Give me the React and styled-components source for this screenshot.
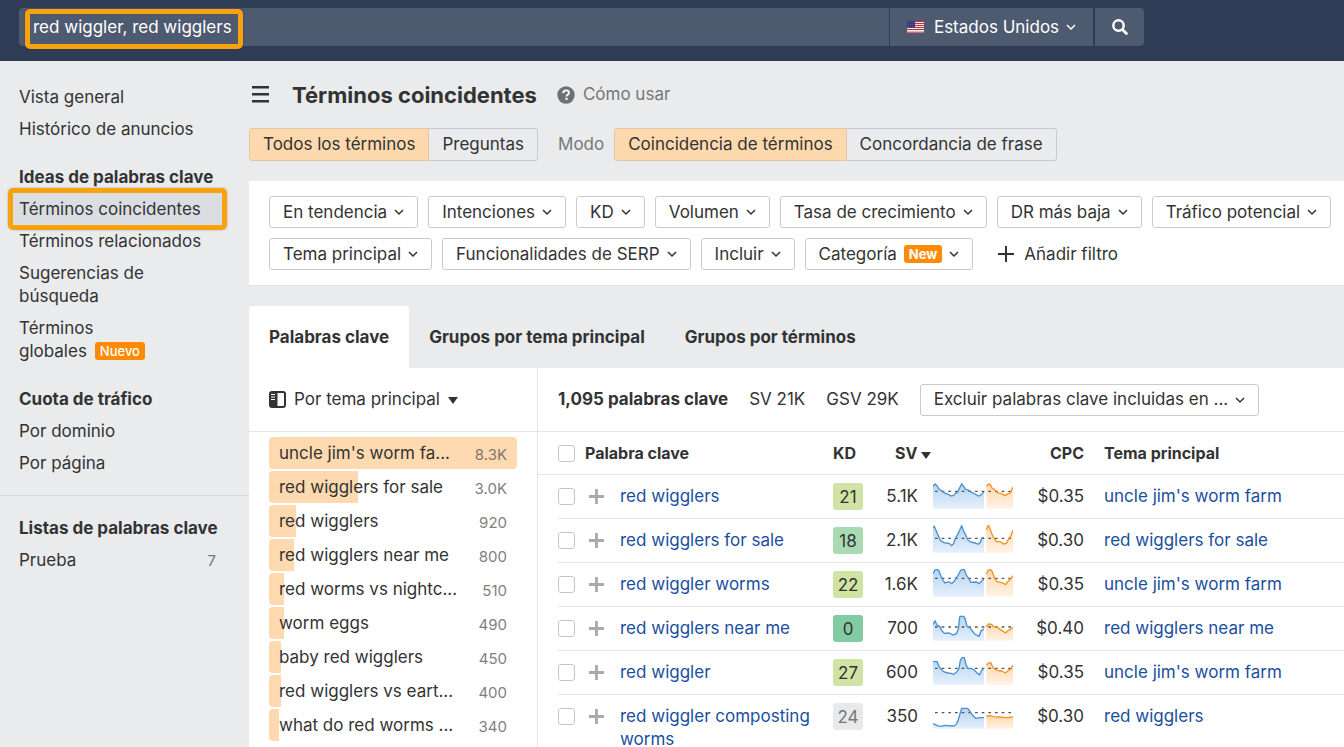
import React, { useState } from 'react';
import styled, { createGlobalStyle } from 'styled-components';

const GlobalStyle = createGlobalStyle`
  * {
    box-sizing: border-box;
  }
  body {
    margin: 0;
    background: #e9ebed;
    color: #333;
    font-family: Inter, 'Liberation Sans', sans-serif;
    font-size: 17px;
    line-height: 23px;
    overflow-x: hidden;
  }
  button, input {
    font: inherit;
    color: inherit;
  }
  button {
    cursor: pointer;
  }
  a {
    color: inherit;
    text-decoration: none;
  }
`;

const TopBar = styled.header`
  padding: 8px 200px 15px 19px;
  background: #2f3c56;
  color: #fff;
`;

const SearchForm = styled.form`
  display: flex;
  height: 38px;
  border-radius: 4px;
  overflow: hidden;
`;

const SearchInput = styled.input`
  display: block;
  flex: 1;
  min-width: 0;
  height: 38px;
  padding: 0 14px;
  border: none;
  outline: none;
  background: #4e5a70;
`;

const BarButton = styled.button`
  display: flex;
  align-items: center;
  justify-content: center;
  gap: ${(props) => props.$gap || 0}px;
  width: ${(props) => props.$width}px;
  margin-left: ${(props) => props.$space}px;
  padding: 0;
  border: none;
  background: #4e5a70;
`;

const CountryName = styled.span`
  margin-left: 3px;
`;

// orange frame laid over the control it points at
const Marker = styled.span`
  position: absolute;
  inset: -5px -1px;
  border: 5px solid #f9a20f;
  border-radius: 5px;
  box-shadow: 0 0 2px rgba(0, 0, 0, 0.3);
  pointer-events: none;
`;

const SearchMarker = styled(Marker)`
  inset: 9px auto auto 25px;
  width: 218px;
  height: 40px;
`;

const Page = styled.div`
  display: flex;
  align-items: stretch;
`;

const Sidebar = styled.nav`
  flex: 0 0 249px;
  padding-top: 20px;
`;

const SideSection = styled.section`
  padding-bottom: 16px;
  border-bottom: ${(props) => (props.$divider ? '1px solid #d6d9dc' : 'none')};
  margin-bottom: ${(props) => (props.$divider ? 16 : 0)}px;
`;

const SideHeading = styled.h2`
  margin: 0;
  padding: 5px 19px 4px;
  font-size: 17px;
  font-weight: 700;
`;

const SideLink = styled.a`
  position: relative;
  display: flex;
  justify-content: space-between;
  margin: 0 23px 0 9px;
  padding: 5px ${(props) => (props.$narrow ? 50 : 10)}px 4px 10px;
  background: ${(props) => (props.$active ? '#dadde2' : 'transparent')};
`;

const Count = styled.span`
  font-size: 15px;
  color: #777;
`;

const Badge = styled.span`
  display: inline-block;
  margin-left: ${(props) => props.$space}px;
  padding: 0 5px;
  border-radius: 3px;
  background: #ff8a05;
  color: #fff;
  font-size: 13px;
  line-height: 18px;
  font-weight: ${(props) => (props.$bold ? 700 : 500)};
  vertical-align: 1px;
`;

const Main = styled.main`
  flex: 1;
  min-width: 0;
`;

const TitleRow = styled.div`
  display: flex;
  align-items: center;
  height: 67px;
`;

const MenuButton = styled.button`
  display: flex;
  padding: 0;
  margin: 0 22px 0 3px;
  border: none;
  background: none;
`;

const Title = styled.h1`
  margin: 0 20px 0 0;
  font-size: 22px;
  line-height: 30px;
  font-weight: 700;
`;

const HelpLink = styled.a`
  display: flex;
  align-items: center;
  gap: 8px;
  color: #777;
`;

const ModeRow = styled.div`
  display: flex;
  align-items: center;
  margin-bottom: 20px;
`;

const ModeLabel = styled.span`
  margin: 0 10px 0 20px;
  color: #777;
`;

const Segment = styled.button`
  height: 33px;
  padding: 0 13px;
  border: 1px solid #c8cbce;
  border-left-width: ${(props) => (props.$first ? 1 : 0)}px;
  border-radius: ${(props) => (props.$first ? '3px 0 0 3px' : '0 3px 3px 0')};
  background: ${(props) => (props.$active ? '#ffd9ae' : 'transparent')};
  border-color: ${(props) => (props.$active ? '#dfc7a8' : '#c8cbce')};
`;

const FilterPanel = styled.section`
  display: flex;
  flex-direction: column;
  gap: 10px;
  padding: 15px 0 15px 20px;
  margin-bottom: 20px;
  background: #fff;
  border-bottom: 1px solid #dfe1e3;
  overflow: hidden;
`;

const FilterRow = styled.div`
  display: flex;
  gap: 10px;
`;

const DropButton = styled.button`
  display: flex;
  flex: none;
  align-items: center;
  gap: 7px;
  height: 32px;
  padding: 0 13px;
  border: 1px solid #c8cbce;
  border-radius: 3px;
  background: #fff;
  white-space: nowrap;
`;

const AddFilter = styled.button`
  display: flex;
  align-items: center;
  gap: 10px;
  margin-left: 15px;
  padding: 0;
  border: none;
  background: none;
`;

const Tabs = styled.div`
  display: flex;
`;

const Tab = styled.button`
  height: 62px;
  padding: 0 20px;
  border: none;
  border-radius: 3px 3px 0 0;
  background: ${(props) => (props.$active ? '#fff' : 'transparent')};
  font-weight: 700;
`;

const Content = styled.div`
  display: flex;
  background: #fff;
`;

const TopicColumn = styled.section`
  flex: 0 0 289px;
  border-right: 1px solid #e3e5e8;
`;

const Toolbar = styled.div`
  display: flex;
  align-items: center;
  gap: ${(props) => props.$gap}px;
  height: 64px;
  padding: 0 20px;
  border-bottom: 1px solid #e3e5e8;
`;

const TopicButton = styled.button`
  display: flex;
  align-items: center;
  gap: 8px;
  padding: 0;
  border: none;
  background: none;
`;

const TopicList = styled.ul`
  display: flex;
  flex-direction: column;
  gap: 2px;
  margin: 0;
  padding: 5px 20px 10px;
  list-style: none;
`;

const Topic = styled.li`
  position: relative;
  display: flex;
  align-items: center;
  justify-content: space-between;
  height: 32px;
  padding: 0 10px;
  border-radius: 4px;
  overflow: hidden;
`;

const TopicBar = styled.span`
  position: absolute;
  inset: 0 auto 0 0;
  background: #ffd9b0;
`;

const TopicName = styled.a`
  position: relative;
`;

const TopicVolume = styled.span`
  position: relative;
  padding-top: 2px;
  font-size: 15px;
  color: #555;
  opacity: 0.75;
`;

const KeywordColumn = styled.section`
  flex: 1;
  min-width: 0;
  overflow: hidden;
`;

const Total = styled.strong`
  font-weight: 700;
`;

const Table = styled.table`
  width: 100%;
  min-width: 780px;
  table-layout: fixed;
  border-spacing: 0;
`;

const HeadCell = styled.th`
  height: 43px;
  padding: 0 ${(props) => props.$right || 0}px 0 ${(props) => props.$left || 0}px;
  border-bottom: 1px solid #e3e5e8;
  font-size: 16px;
  font-weight: 700;
  text-align: ${(props) => props.$align || 'left'};
  white-space: nowrap;
`;

const Cell = styled.td`
  height: 44px;
  padding: ${(props) => props.$top || 10}px ${(props) => props.$right || 0}px 0 0;
  vertical-align: top;
  text-align: ${(props) => props.$align || 'left'};
  background: linear-gradient(#e3e5e8, #e3e5e8) ${(props) => props.$inset || 0}px 100% / 100% 1px no-repeat;
`;

const KeywordLink = styled.a`
  color: #1a4f9f;
  &:hover {
    text-decoration: underline;
  }
`;

const Check = styled.input.attrs({ type: 'checkbox' })`
  appearance: none;
  display: block;
  width: 17px;
  height: 17px;
  margin: ${(props) => props.$top || 0}px 0 0 20px;
  border: 1px solid #c3c7cb;
  border-radius: 3px;
  background: #fff;
  &:checked {
    background: #ff8a05;
  }
`;

const PlusButton = styled.button`
  display: flex;
  padding: 0;
  margin: 4px 0 0 4px;
  border: none;
  background: none;
`;

const Difficulty = styled.span`
  display: block;
  width: 30px;
  height: 27px;
  border-radius: 3px;
  line-height: 28px;
  text-align: center;
  background: ${(props) => props.$color};
  color: ${(props) => (props.$muted ? '#777' : '#333')};
`;

const Sparkline = styled.svg`
  display: block;
  width: 80px;
  height: 28px;
`;

const Chevron = () => (
  <svg width="10" height="10" viewBox="0 0 10 10" fill="none" stroke="currentColor" strokeWidth="1.5">
    <path d="M1 3l4 4 4-4" />
  </svg>
);

const Caret = () => (
  <svg width="10" height="8" viewBox="0 0 10 8" fill="currentColor">
    <path d="M0 1h10L5 8z" />
  </svg>
);

const Plus = ({ size, color, weight }) => (
  <svg width={size} height={size} viewBox="0 0 16 16" stroke={color} strokeWidth={weight}>
    <path d="M8 0v16M0 8h16" />
  </svg>
);

const Flag = () => (
  <svg width="17" height="12" viewBox="0 0 17 12">
    <path d="M0 0h17v12H0z" fill="#f3e9ec" />
    <path d="M0 .5h17M0 2.5h17M0 4.5h17M0 6.5h17M0 8.5h17M0 11.2h17" stroke="#b83240" />
    <path d="M0 0h8v6.5H0z" fill="#31407c" />
    <path d="M1 1.5h6M1 3.5h6M1 5.2h6" stroke="#6673a3" strokeWidth=".5" strokeDasharray="1 1" />
  </svg>
);

const MagnifierIcon = () => (
  <svg width="16" height="16" viewBox="0 0 16 16" fill="none" stroke="#fff">
    <circle cx="6.5" cy="6.5" r="5.2" strokeWidth="2.4" />
    <path d="M10.4 10.4l4 4" strokeWidth="2.8" strokeLinecap="round" />
  </svg>
);

const MenuIcon = () => (
  <svg width="18" height="18" viewBox="0 0 18 18" stroke="#333" strokeWidth="2.4">
    <path d="M0 1.3h17M0 8.3h17M0 15.3h17" />
  </svg>
);

const HelpIcon = () => (
  <svg width="18" height="18" viewBox="0 0 18 18">
    <circle cx="9" cy="9" r="8.7" fill="#6f7173" />
    <path
      d="M6.2 7.1C6.3 5.3 7.5 4.4 9.1 4.4c1.6 0 2.8.9 2.8 2.3 0 1-.5 1.6-1.3 2.1-.8.5-1.1.8-1.1 1.6"
      fill="none"
      stroke="#fff"
      strokeWidth="1.9"
    />
    <path d="M8.4 11.8h2.2v2.1H8.4z" fill="#fff" />
  </svg>
);

const PanelIcon = () => (
  <svg width="17" height="17" viewBox="0 0 17 17">
    <rect x="1" y="1" width="15" height="15" rx="2" fill="none" stroke="#333" strokeWidth="2" />
    <path d="M1 1h7.5v15H1z" fill="#333" />
    <path d="M2 3.5h4M2 6h4M2 8.5h4" stroke="#fff" />
  </svg>
);

const filtersTop = [
  'En tendencia',
  'Intenciones',
  'KD',
  'Volumen',
  'Tasa de crecimiento',
  'DR más baja',
  'Tráfico potencial',
];
const filtersBottom = ['Tema principal', 'Funcionalidades de SERP', 'Incluir'];

const tabs = ['Palabras clave', 'Grupos por tema principal', 'Grupos por términos'];

const topics = [
  { name: "uncle jim's worm fa...", volume: '8.3K', share: 100 },
  { name: 'red wigglers for sale', volume: '3.0K', share: 36 },
  { name: 'red wigglers', volume: '920', share: 11 },
  { name: 'red wigglers near me', volume: '800', share: 10 },
  { name: 'red worms vs nightc...', volume: '510', share: 6 },
  { name: 'worm eggs', volume: '490', share: 6 },
  { name: 'baby red wigglers', volume: '450', share: 5 },
  { name: 'red wigglers vs eart...', volume: '400', share: 5 },
  { name: 'what do red worms ...', volume: '340', share: 4 },
];

const green = '#d0e3a4';

// past / forecast are sparkline points on a 240x84 grid
const keywords = [
  {
    name: 'red wigglers', kd: 21, color: green, sv: '5.1K', cpc: '$0.35', topic: "uncle jim's worm farm", avg: 31,
    past: '0,16 6,9 12,14 18,24 26,29 34,36 44,39 54,45 62,43 68,36 74,34 80,20 86,9 92,16 98,25 106,27 116,34 126,39 136,45 144,42 150,35 153,33',
    forecast: '160,16 166,9 172,11 178,22 186,26 192,35 204,37 216,44 226,38 232,35 240,18',
  },
  {
    name: 'red wigglers for sale', kd: 18, color: '#a9dab3', sv: '2.1K', cpc: '$0.30', topic: 'red wigglers for sale', avg: 40,
    past: '0,8 4,4 10,18 16,32 22,46 32,53 40,54 48,55 56,62 62,55 66,42 72,32 78,20 86,2 92,18 98,30 104,44 112,51 126,54 136,58 142,52 146,40 153,37',
    forecast: '160,14 166,0 172,14 178,30 184,42 190,50 202,50 212,57 220,55 228,40 234,32 240,15',
  },
  {
    name: 'red wiggler worms', kd: 22, color: green, sv: '1.6K', cpc: '$0.35', topic: "uncle jim's worm farm", avg: 28,
    past: '0,14 6,3 12,1 18,6 24,22 30,34 36,42 48,38 56,44 64,36 70,26 76,18 82,6 88,1 94,2 100,18 108,30 114,40 130,39 138,44 144,38 153,29',
    forecast: '160,16 166,3 172,2 178,8 184,26 192,38 206,41 218,46 226,36 234,28 240,20',
  },
  {
    name: 'red wigglers near me', kd: 0, color: '#82cba3', sv: '700', cpc: '$0.40', topic: 'red wigglers near me', avg: 42,
    past: '0,34 6,24 12,36 20,40 26,52 34,61 48,60 60,66 70,62 76,48 80,12 82,10 92,10 96,16 102,40 110,44 118,54 126,64 138,70 144,54 153,48',
    forecast: '160,42 166,33 176,34 182,42 194,44 206,52 218,60 226,52 234,48 240,43',
  },
  {
    name: 'red wiggler', kd: 27, color: green, sv: '600', cpc: '$0.35', topic: "uncle jim's worm farm", avg: 34,
    past: '0,14 12,14 18,28 24,36 32,44 44,48 54,49 62,52 72,44 78,34 82,10 88,1 94,1 98,20 104,34 116,35 124,39 132,48 140,53 146,40 153,34',
    forecast: '160,24 168,18 174,18 180,32 192,40 206,42 218,48 226,40 234,36 240,24',
  },
  {
    name: 'red wiggler composting worms', kd: 24, color: '#e8e9eb', muted: true, sv: '350', cpc: '$0.30', topic: 'red wigglers', avg: 35,
    past: '0,69 6,70 12,74 24,76 36,73 60,75 68,72 74,62 80,42 86,22 104,22 110,30 118,42 128,52 140,50 153,50',
    forecast: '160,45 172,44 182,47 196,48 220,50 240,48',
  },
];

const Trend = ({ past, forecast, avg }) => (
  <Sparkline viewBox="0 0 240 84" aria-hidden="true">
    <defs>
      <linearGradient id="pastFill" x1="0" x2="0" y1="0" y2="1">
        <stop offset="0" stopColor="#b4d5f2" />
        <stop offset="1" stopColor="#e6f0fb" />
      </linearGradient>
      <linearGradient id="forecastFill" x1="0" x2="0" y1="0" y2="1">
        <stop offset="0" stopColor="#ffd9ae" />
        <stop offset="1" stopColor="#fff2e6" />
      </linearGradient>
    </defs>
    <polygon points={`0,83 ${past} 153,83`} fill="url(#pastFill)" />
    <polygon points={`160,83 ${forecast} 240,83`} fill="url(#forecastFill)" />
    <path d={`M6 ${avg}H240`} stroke="#555" strokeWidth="4" strokeDasharray="8 12" />
    <polyline points={past} fill="none" stroke="#4c8fd0" strokeWidth="4" />
    <polyline points={forecast} fill="none" stroke="#f59322" strokeWidth="4" />
  </Sparkline>
);

const App = () => {
  const [query, setQuery] = useState('red wiggler, red wigglers');
  const [activeTab, setActiveTab] = useState(0);

  return (
    <>
      <GlobalStyle />
      <TopBar>
        <SearchForm onSubmit={(e) => e.preventDefault()}>
          <SearchInput aria-label="Palabras clave" value={query} onChange={(e) => setQuery(e.target.value)} />
          <BarButton type="button" $width={203} $space={1} $gap={7}>
            <Flag />
            <CountryName>Estados Unidos</CountryName>
            <Chevron />
          </BarButton>
          <BarButton type="submit" aria-label="Buscar" $width={49} $space={2}>
            <MagnifierIcon />
          </BarButton>
        </SearchForm>
        <SearchMarker />
      </TopBar>
      <Page>
        <Sidebar>
          <SideSection>
            <SideLink href="#">Vista general</SideLink>
            <SideLink href="#">Histórico de anuncios</SideLink>
          </SideSection>
          <SideSection>
            <SideHeading>Ideas de palabras clave</SideHeading>
            <SideLink href="#" $active>
              Términos coincidentes
              <Marker />
            </SideLink>
            <SideLink href="#">Términos relacionados</SideLink>
            <SideLink href="#" $narrow>Sugerencias de búsqueda</SideLink>
            <SideLink href="#" $narrow>
              <span>
                Términos
                <br />
                globales
                <Badge $space={8}>Nuevo</Badge>
              </span>
            </SideLink>
          </SideSection>
          <SideSection $divider>
            <SideHeading>Cuota de tráfico</SideHeading>
            <SideLink href="#">Por dominio</SideLink>
            <SideLink href="#">Por página</SideLink>
          </SideSection>
          <SideSection>
            <SideHeading>Listas de palabras clave</SideHeading>
            <SideLink href="#">
              Prueba
              <Count>7</Count>
            </SideLink>
          </SideSection>
        </Sidebar>
        <Main>
          <TitleRow>
            <MenuButton aria-label="Menú">
              <MenuIcon />
            </MenuButton>
            <Title>Términos coincidentes</Title>
            <HelpLink href="#">
              <HelpIcon />
              Cómo usar
            </HelpLink>
          </TitleRow>
          <ModeRow>
            <Segment $first $active>Todos los términos</Segment>
            <Segment>Preguntas</Segment>
            <ModeLabel>Modo</ModeLabel>
            <Segment $first $active>Coincidencia de términos</Segment>
            <Segment>Concordancia de frase</Segment>
          </ModeRow>
          <FilterPanel>
            <FilterRow>
              {filtersTop.map((label) => (
                <DropButton key={label}>
                  {label}
                  <Chevron />
                </DropButton>
              ))}
            </FilterRow>
            <FilterRow>
              {filtersBottom.map((label) => (
                <DropButton key={label}>
                  {label}
                  <Chevron />
                </DropButton>
              ))}
              <DropButton>
                Categoría
                <Badge $bold $space={0}>New</Badge>
                <Chevron />
              </DropButton>
              <AddFilter>
                <Plus size={16} color="#333" weight={2} />
                Añadir filtro
              </AddFilter>
            </FilterRow>
          </FilterPanel>
          <Tabs role="tablist">
            {tabs.map((label, index) => (
              <Tab
                key={label}
                role="tab"
                aria-selected={index === activeTab}
                $active={index === activeTab}
                onClick={() => setActiveTab(index)}
              >
                {label}
              </Tab>
            ))}
          </Tabs>
          <Content>
            <TopicColumn>
              <Toolbar>
                <TopicButton>
                  <PanelIcon />
                  Por tema principal
                  <Caret />
                </TopicButton>
              </Toolbar>
              <TopicList>
                {topics.map((topic) => (
                  <Topic key={topic.name}>
                    <TopicBar style={{ width: `${topic.share}%` }} />
                    <TopicName href="#">{topic.name}</TopicName>
                    <TopicVolume>{topic.volume}</TopicVolume>
                  </Topic>
                ))}
              </TopicList>
            </TopicColumn>
            <KeywordColumn>
              <Toolbar $gap={21}>
                <Total>1,095 palabras clave</Total>
                <span>SV 21K</span>
                <span>GSV 29K</span>
                <DropButton>
                  Excluir palabras clave incluidas en ...
                  <Chevron />
                </DropButton>
              </Toolbar>
              <Table>
                <colgroup>
                  <col width="47" />
                  <col width="35" />
                  <col width="213" />
                  <col width="47" />
                  <col width="53" />
                  <col width="80" />
                  <col width="91" />
                  <col />
                </colgroup>
                <thead>
                  <tr>
                    <HeadCell>
                      <Check aria-label="Seleccionar todo" />
                    </HeadCell>
                    <HeadCell colSpan={2}>Palabra clave</HeadCell>
                    <HeadCell>KD</HeadCell>
                    <HeadCell colSpan={2} $left={15}>
                      SV <Caret />
                    </HeadCell>
                    <HeadCell $align="right" $right={20}>CPC</HeadCell>
                    <HeadCell>Tema principal</HeadCell>
                  </tr>
                </thead>
                <tbody>
                  {keywords.map((row) => (
                    <tr key={row.name}>
                      <Cell $inset={20}>
                        <Check $top={3} aria-label={row.name} />
                      </Cell>
                      <Cell>
                        <PlusButton aria-label="Añadir">
                          <Plus size={15} color="#aaa" weight={3} />
                        </PlusButton>
                      </Cell>
                      <Cell $right={15}>
                        <KeywordLink href="#">{row.name}</KeywordLink>
                      </Cell>
                      <Cell $top={8}>
                        <Difficulty $color={row.color} $muted={row.muted}>{row.kd}</Difficulty>
                      </Cell>
                      <Cell $align="right" $right={15}>{row.sv}</Cell>
                      <Cell $top={6}>
                        <Trend past={row.past} forecast={row.forecast} avg={row.avg} />
                      </Cell>
                      <Cell $align="right" $right={20}>{row.cpc}</Cell>
                      <Cell>
                        <KeywordLink href="#">{row.topic}</KeywordLink>
                      </Cell>
                    </tr>
                  ))}
                </tbody>
              </Table>
            </KeywordColumn>
          </Content>
        </Main>
      </Page>
    </>
  );
};

export default App;
